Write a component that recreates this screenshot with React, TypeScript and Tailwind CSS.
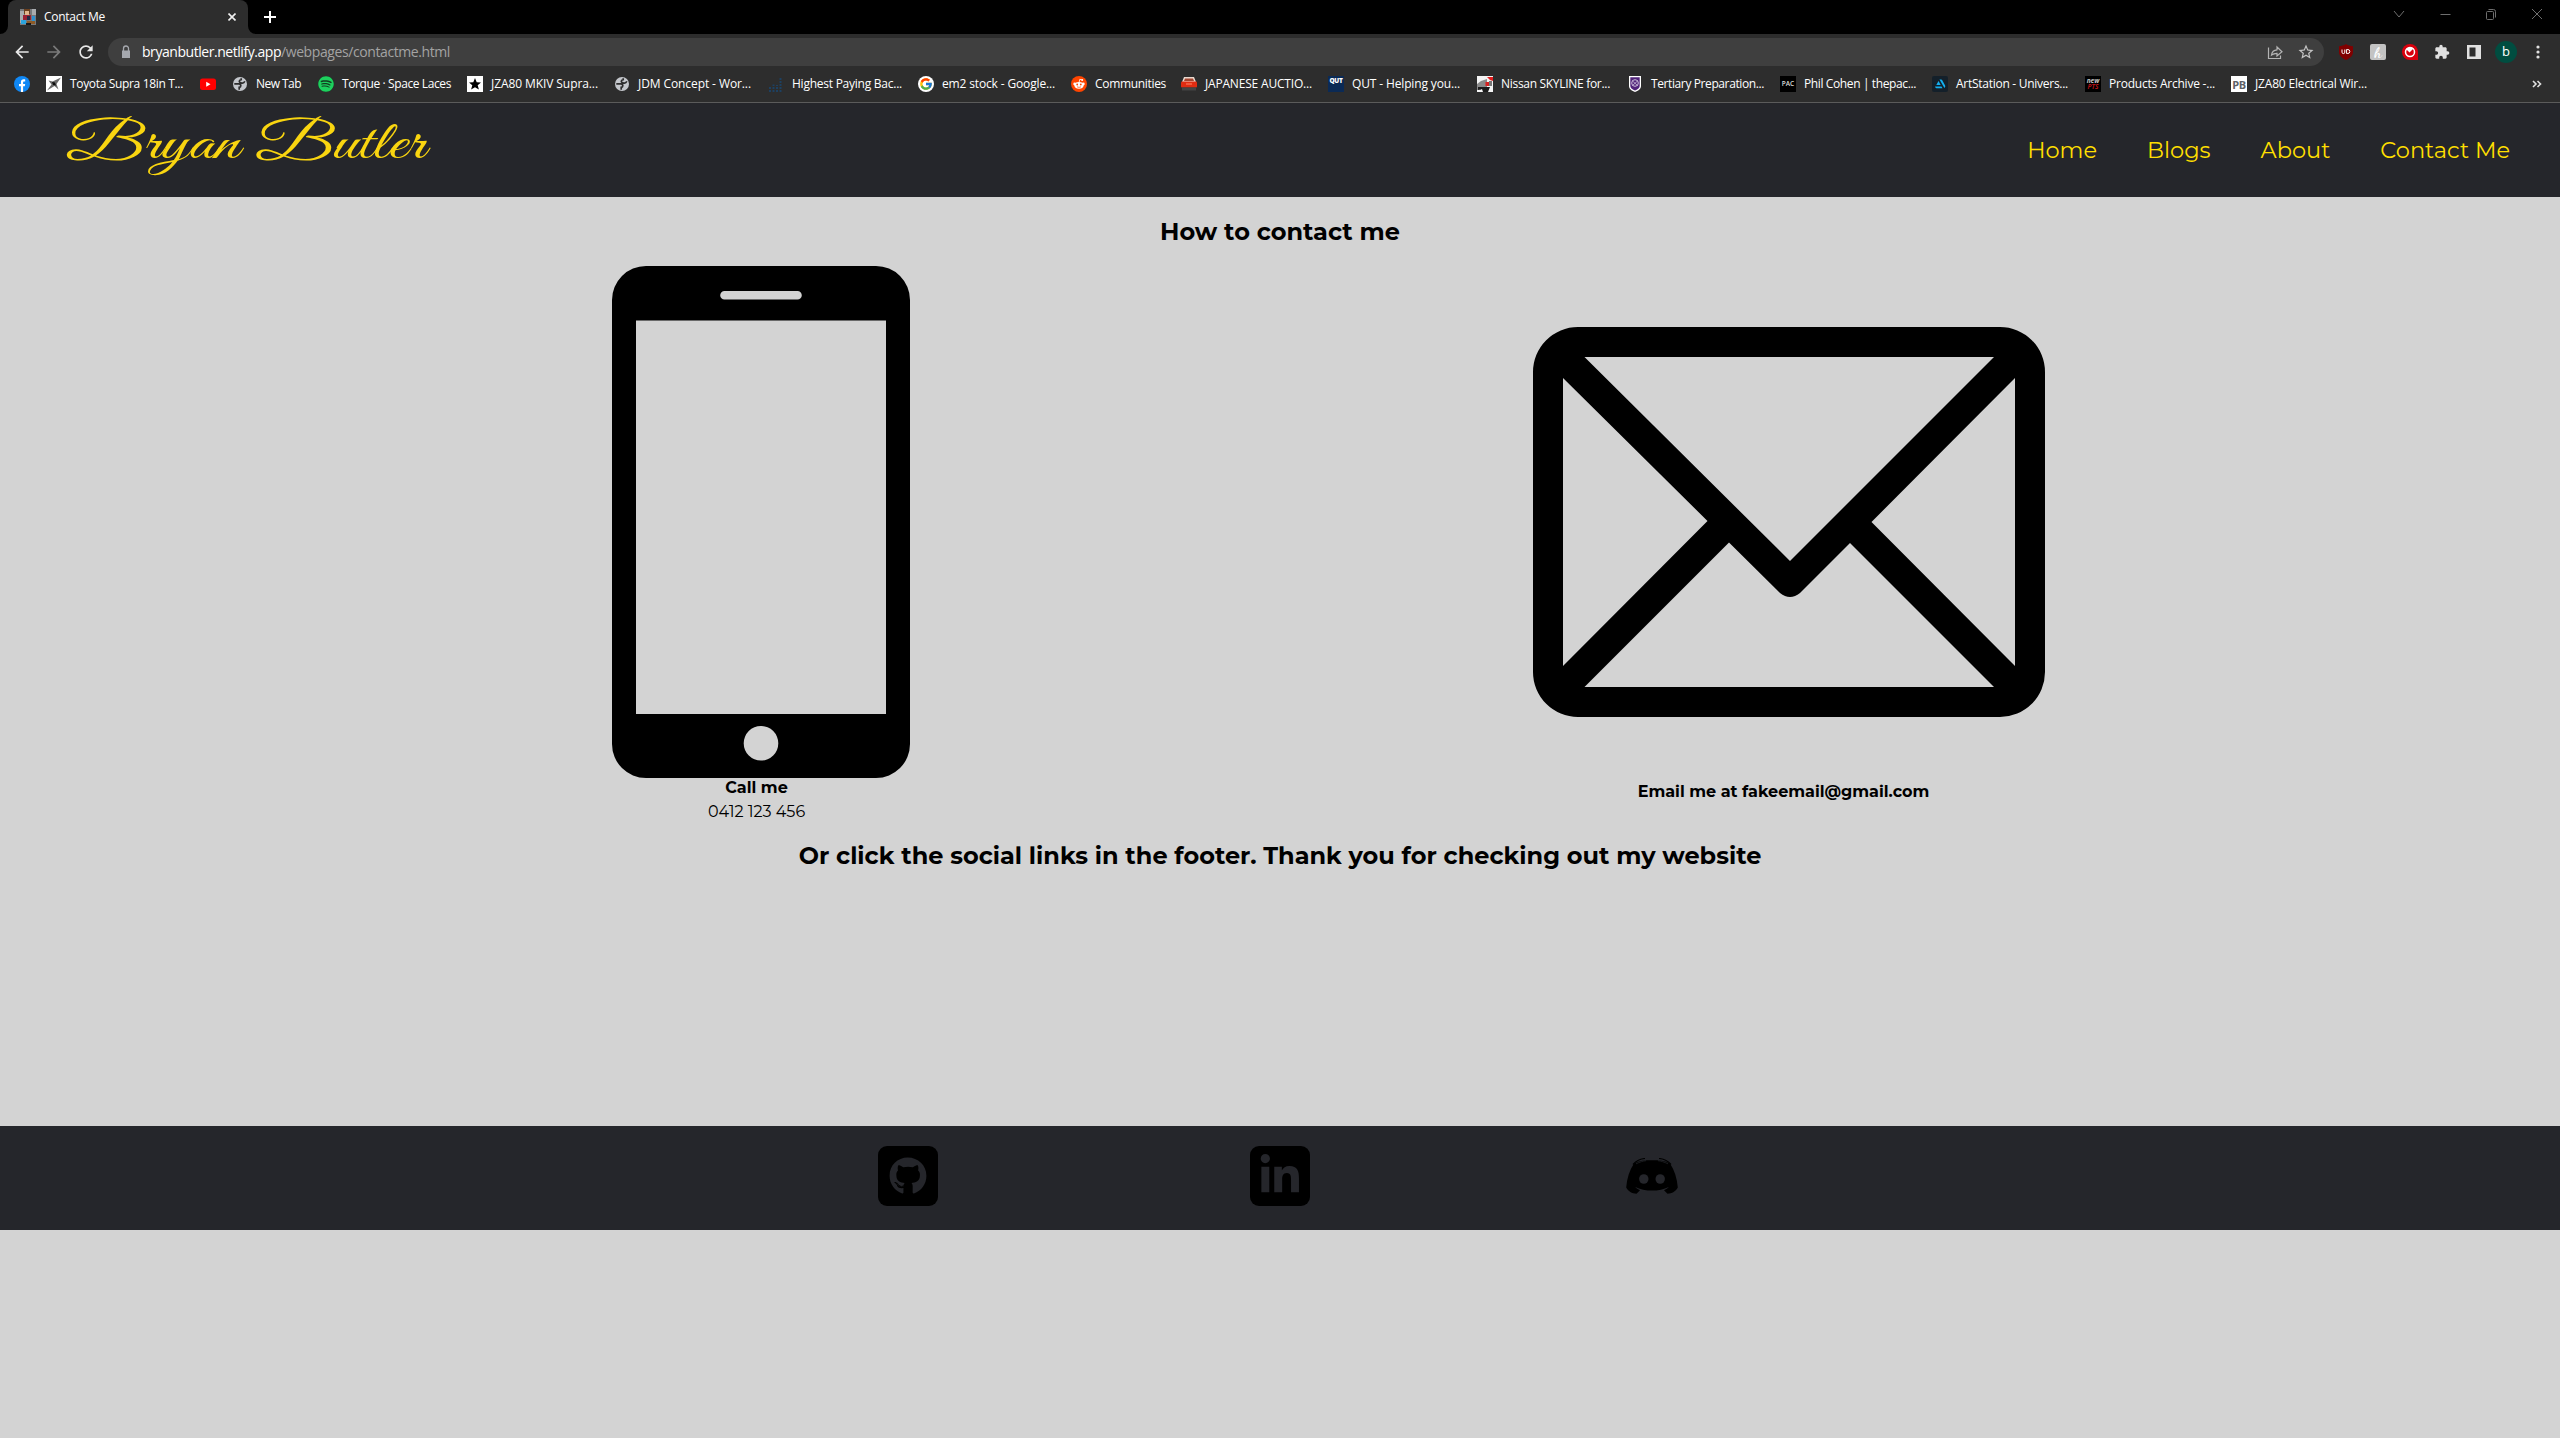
import { useLayoutEffect, useRef, useState, type ReactNode } from "react";
import { FaGithub, FaLinkedinIn, FaSpotify } from "react-icons/fa";
import { FcGoogle } from "react-icons/fc";
import { MdArrowBack, MdArrowForward, MdExtension, MdLock, MdRefresh, MdStarBorder } from "react-icons/md";

/* Spreads a single line of text over an exact width by adjusting its tracking. */
function Fit({ width, children, className = "" }: { width: number; children: string; className?: string }) {
  const ref = useRef<HTMLSpanElement>(null);
  const [spacing, setSpacing] = useState(0);
  useLayoutEffect(() => {
    if (!ref.current) return;
    const natural = ref.current.getBoundingClientRect().width - spacing * children.length;
    setSpacing((width - natural) / children.length);
  }, [width, children]);
  return (
    <span ref={ref} className={`inline-block whitespace-pre ${className}`} style={{ letterSpacing: `${spacing}px` }}>
      {children}
    </span>
  );
}

const Svg = ({ children, box = "0 0 16 16" }: { children: ReactNode; box?: string }) => (
  <svg viewBox={box} className="size-4 shrink-0">{children}</svg>
);

const Facebook = () => (
  <Svg>
    <circle cx="8" cy="8" r="8" fill="#1088f5" />
    <path d="M6.900 16V10.300H5V8h1.900V6.500c0-2 1-3.200 2.900-3.200.7 0 1.200.1 1.400.1v2h-1c-.9 0-1.100.5-1.100 1.200V8h2.100l-.4 2.300H9.100V16z" fill="#fff" />
  </Svg>
);
const Toyota = () => (
  <Svg>
    <rect width="16" height="16" fill="#fff" />
    <path d="M2.500 4.500l4 1L15 1.500 10.500 8l2 5.500L8.500 10 1 14.500 5.500 8.500z" fill="#6b6b6b" />
    <path d="M6 6l3 .5 1 3-3-.5z" fill="#0d0d0d" />
  </Svg>
);
const YouTube = () => (
  <Svg>
    <rect y="2.500" width="16" height="11.500" rx="2.500" fill="#f00" />
    <path d="M6.200 5.700v5l4.300-2.500z" fill="#fff" />
  </Svg>
);
const Globe = () => (
  <Svg>
    <circle cx="8" cy="8" r="7" fill="#c4c7cc" />
    <path d="M2.300 7.800h4.500c1.500 0 2 .9 2 1.900s-.8 1.500-1.600 1.600v2.400M12.800 5.200c-.6 1.600-1.300 2-2.600 1.900C8.600 7 7.300 6.400 7.300 5.300c0-1.200 1-1.500 1.900-1.700V2.200" fill="none" stroke="#2d2d2d" strokeWidth="1.700" />
  </Svg>
);
const Spotify = () => (
  <span className="flex size-4 shrink-0 items-center justify-center rounded-full bg-[#123d20]">
    <FaSpotify className="size-4 text-[#1ed05e]" />
  </span>
);
const StarTile = () => (
  <Svg>
    <rect width="16" height="16" fill="#fff" />
    <path d="M8 2l1.700 4.200 4.300.2-3.300 2.800 1.200 4.400L8 11.200l-3.900 2.400 1.200-4.400L2 6.400l4.300-.2z" fill="#000" />
  </Svg>
);
const Bars = () => (
  <Svg>
    <path d="M2 16V11M5.500 16V8.500M9 16V9M12.500 16V1" stroke="#1d4061" strokeWidth="2" strokeDasharray="2 1" />
  </Svg>
);
const Google = () => (
  <span className="flex size-4 shrink-0 items-center justify-center rounded-full bg-white">
    <FcGoogle className="size-[14px]" />
  </span>
);
const Reddit = () => (
  <Svg>
    <circle cx="8" cy="8" r="8" fill="#ff4500" />
    <path d="M8.200 6l.6-2.700 2 .5" stroke="#fff" strokeWidth=".8" fill="none" />
    <circle cx="11.200" cy="3.900" r="1" fill="#fff" />
    <circle cx="3.600" cy="7.900" r="1.300" fill="#fff" />
    <circle cx="12.400" cy="7.900" r="1.300" fill="#fff" />
    <ellipse cx="8" cy="9.300" rx="4.600" ry="3.400" fill="#fff" />
    <circle cx="6.200" cy="8.500" r=".9" fill="#ff4500" />
    <circle cx="9.800" cy="8.500" r=".9" fill="#ff4500" />
    <path d="M6 10.700c1 .8 3 .8 4 0" stroke="#ff4500" strokeWidth=".7" fill="none" />
  </Svg>
);
const RedCar = () => (
  <Svg>
    <path d="M3 1h10l2 5H1z" fill="#e8d9cf" />
    <path d="M4 2.500h8l1 2.500H3z" fill="#a5452f" />
    <rect x="0" y="5.500" width="16" height="6" rx="1" fill="#e02c12" />
    <rect x="5" y="7" width="6" height="2" fill="#f0593b" />
    <rect x="1" y="11.500" width="14" height="3" fill="#444" />
  </Svg>
);
const Qut = () => (
  <span className="flex size-4 shrink-0 justify-center overflow-hidden bg-[#0b2a55] font-['Open_Sans',sans-serif] text-[6.500px] leading-[10px] font-extrabold tracking-[-0.3px] text-white">QUT</span>
);
const Nissan = () => (
  <Svg>
    <rect width="16" height="16" fill="#f4f4f4" />
    <path d="M0 8l4-3 6-2v9H5l-1 2H0z" fill="#8a8a8a" />
    <path d="M1 11h12l-2 5H6l-1-3-4 1z" fill="#1c1c1c" />
    <path d="M10 1h6v4l-3-1z" fill="#e11f1f" />
    <rect x="8.500" y="6" width="3.500" height="4" fill="#d62222" />
    <rect x="12" y="5" width="3" height="5" fill="#777" />
  </Svg>
);
const Crest = () => (
  <Svg>
    <path d="M2 0h12v10c0 3-3 5-6 6-3-1-6-3-6-6z" fill="#fff" />
    <path d="M3.300 1.300h9.400V10c0 2.200-2.400 3.800-4.700 4.600C5.700 13.800 3.300 12.200 3.300 10z" fill="#51247a" />
    <circle cx="8" cy="7" r="3.300" fill="none" stroke="#cdbfdb" />
    <path d="M5.500 5l5 4.500M10.500 5l-5 4.500" stroke="#cdbfdb" strokeWidth=".8" />
  </Svg>
);
const Pac = () => (
  <span className="flex size-4 shrink-0 items-center justify-center overflow-hidden bg-black font-['Open_Sans',sans-serif] text-[6.500px] leading-none font-semibold text-[#ddd]">PAC</span>
);
const ArtStation = () => (
  <Svg>
    <rect width="16" height="16" rx="2" fill="#14202a" />
    <path d="M3 10.500h6.500l1 1.800H4.500c-.6 0-.9-.3-1.100-.7zM4.300 9l2.200-3.900L8.700 9zM7.500 3.500h1.700c.4 0 .7.200.9.500l3 5.600c.3.500.2.900 0 1.300l-.7 1.200z" fill="#13aff0" />
  </Svg>
);
const NewPts = () => (
  <span className="flex size-4 shrink-0 flex-col items-center justify-center overflow-hidden bg-black font-['Open_Sans',sans-serif] text-[6.500px] leading-[6px] font-bold italic">
    <span className="text-[#c9c9c9]">new</span>
    <span className="text-[#b31217]">PTS</span>
  </span>
);
const Pb = () => (
  <span className="flex size-4 shrink-0 items-center justify-center overflow-hidden bg-white font-['Open_Sans',sans-serif] text-[11px] leading-none font-bold tracking-[-0.5px] text-[#5d6066]">PB</span>
);

const bookmarks: { icon: ReactNode; label?: string; text?: number; cell: string }[] = [
  { icon: <Facebook />, cell: "w-8" },
  { icon: <Toyota />, label: "Toyota Supra 18in T...", text: 113, cell: "w-[154px]" },
  { icon: <YouTube />, cell: "w-8" },
  { icon: <Globe />, label: "New Tab", text: 45, cell: "w-[86px]" },
  { icon: <Spotify />, label: "Torque · Space Laces", text: 109, cell: "w-[149px]" },
  { icon: <StarTile />, label: "JZA80 MKIV Supra...", text: 107, cell: "w-[147px]" },
  { icon: <Globe />, label: "JDM Concept - Wor...", text: 113, cell: "w-[154px]" },
  { icon: <Bars />, label: "Highest Paying Bac...", text: 110, cell: "w-[150px]" },
  { icon: <Google />, label: "em2 stock - Google...", text: 113, cell: "w-[153px]" },
  { icon: <Reddit />, label: "Communities", text: 71, cell: "w-[110px]" },
  { icon: <RedCar />, label: "JAPANESE AUCTIO...", text: 107, cell: "w-[147px]" },
  { icon: <Qut />, label: "QUT - Helping you...", text: 108, cell: "w-[149px]" },
  { icon: <Nissan />, label: "Nissan SKYLINE for...", text: 109, cell: "w-[150px]" },
  { icon: <Crest />, label: "Tertiary Preparation...", text: 113, cell: "w-[153px]" },
  { icon: <Pac />, label: "Phil Cohen | thepac...", text: 112, cell: "w-[152px]" },
  { icon: <ArtStation />, label: "ArtStation - Univers...", text: 112, cell: "w-[153px]" },
  { icon: <NewPts />, label: "Products Archive -...", text: 106, cell: "w-[146px]" },
  { icon: <Pb />, label: "JZA80 Electrical Wir...", text: 112, cell: "w-[150px]" },
];

function TabStrip() {
  return (
    <div className="flex h-[34px] justify-between bg-black">
      <div className="flex">
        <svg viewBox="0 0 8 34" className="h-[34px] w-2 fill-[#2d2d2d]"><path d="M8 26v8H0a8 8 0 0 0 8-8z" /></svg>
        <div className="flex w-[240px] items-center rounded-t-lg bg-[#2d2d2d] pr-3 pl-3 text-white">
          <Svg>
            <rect width="16" height="16" fill="#77797c" />
            <path d="M0 2h4v12H0zM12 0h4v6h-4z" fill="#a9abae" />
            <rect x="4" y="0" width="6" height="5" fill="#6b3f1d" />
            <rect x="5" y="2" width="4" height="4" fill="#e2b48c" />
            <rect x="3" y="6" width="8" height="5" fill="#9b2032" />
            <rect x="7" y="7" width="3" height="4" fill="#222a44" />
            <rect x="1" y="11" width="5" height="4" fill="#2ba4dd" />
            <rect x="12" y="7" width="3" height="5" fill="#2b8fd0" />
            <rect x="7" y="12" width="8" height="3" fill="#8c5a26" />
            <rect x="6" y="14" width="5" height="2" fill="#151515" />
          </Svg>
          <Fit width={61} className="ml-2 text-[12px] leading-none">Contact Me</Fit>
          <svg viewBox="0 0 8 8" className="ml-auto size-2 stroke-[#f0f0f0] stroke-[1.600]"><path d="M.5.5l7 7M7.500.5l-7 7" /></svg>
        </div>
        <svg viewBox="0 0 8 34" className="h-[34px] w-2 fill-[#2d2d2d]"><path d="M0 26v8h8a8 8 0 0 1-8-8z" /></svg>
        <svg viewBox="0 0 12 34" className="ml-2 h-[34px] w-3 stroke-white stroke-2"><path d="M6 11v12M0 17h12" /></svg>
      </div>
      <div className="mt-2 mr-[17px] flex h-3 w-[150px] justify-between">
        <svg viewBox="0 0 12 12" className="h-3 w-3 fill-none stroke-[#6e6e6e]"><path d="M1 3l5 6 5-6" /></svg>
        <svg viewBox="0 0 12 12" className="h-3 w-3 fill-none stroke-[#6e6e6e]"><path d="M1.500 6.500h10" /></svg>
        <svg viewBox="0 0 12 12" className="h-3 w-3 fill-none stroke-[#6e6e6e]"><rect x="1.500" y="3.500" width="7" height="8" rx="1" /><path d="M3.500 1.500h5a2 2 0 0 1 2 2v6" /></svg>
        <svg viewBox="0 0 12 12" className="h-3 w-3 fill-none stroke-[#6e6e6e]"><path d="M1 1l10 10M11 1L1 11" /></svg>
      </div>
    </div>
  );
}

function Toolbar() {
  return (
    <div className="flex h-9 items-center bg-[#2d2d2d] pl-3 text-[#e8e8e8]">
      <MdArrowBack className="size-5" />
      <MdArrowForward className="ml-3 size-5 text-[#7a7a7a]" />
      <MdRefresh className="ml-3 size-5" />
      <div className="ml-3 flex h-7 w-[2216px] items-center rounded-full bg-[#3f3f3f] pr-[9px] pl-[10px]">
        <svg viewBox="0 0 16 16" className="size-4">
          <path d="M4 6.500h8v7.500H4z" fill="#a5a8ae" /><path d="M5.500 7V4.500a2.500 2.500 0 0 1 5 0V7" fill="none" stroke="#a5a8ae" strokeWidth="1.300" />
        </svg>
        <span className="ml-2 flex text-[14px] leading-none">
          <Fit width={139} className="text-white">bryanbutler.netlify.app</Fit>
          <Fit width={169} className="text-[#a3a3a3]">/webpages/contactme.html</Fit>
        </span>
        <svg viewBox="0 0 16 16" className="ml-auto size-4 fill-none stroke-[#b4b4b4] stroke-[1.200]">
          <path d="M1.500 3.500v11h12v-3" /><path d="M4.500 11c.5-3.500 2.500-5 5.500-5.200V3l5 4.700-5 4.300V9.300C7.500 9.300 6 9.800 4.500 11z" />
        </svg>
        <MdStarBorder className="ml-[14px] size-[18px] text-[#c4c4c4]" />
      </div>
      <div className="ml-[14px] flex items-center gap-4">
        <span className="flex size-4 items-center justify-center">
          <svg viewBox="0 0 16 16" className="size-4">
            <path d="M8 0c2 1.500 4.500 2 7 2.200V8c0 4-3.500 6.500-7 8-3.500-1.500-7-4-7-8V2.200C3.500 2 6 1.500 8 0z" fill="#800000" />
            <path d="M4 5.500v2.700a1.400 1.400 0 0 0 2.800 0V5.500M8.600 5.500v4h1.200a2 2 0 0 0 0-4z" fill="none" stroke="#fff" />
          </svg>
        </span>
        <span className="flex size-4 items-center justify-center rounded-[2px] bg-[#c3c3c3] font-['Dancing_Script','Liberation_Serif',serif] text-[15px] leading-none font-bold text-white">h</span>
        <svg viewBox="0 0 16 16" className="size-4">
          <path d="M8 0a8 8 0 0 1 8 8v8H8A8 8 0 0 1 8 0z" fill="#d9000d" />
          <circle cx="8" cy="8" r="4.500" fill="none" stroke="#fff" strokeWidth="1.500" />
          <path d="M4.500 5.500L7.500 8.500 11.500 4.500A4.500 4.500 0 0 0 4.500 5.500z" fill="#fff" />
        </svg>
        <MdExtension className="size-4 text-[#e0e0e0]" />
        <svg viewBox="0 0 16 16" className="size-4"><path d="M1 1h14v14H1zM3.500 3.500v9h6v-9z" fill="#e0e0e0" fillRule="evenodd" /></svg>
      </div>
      <span className="ml-[13px] flex size-[22px] items-center justify-center rounded-full bg-[#004d40] pb-px text-[13px] leading-none text-white">b</span>
      <svg viewBox="0 0 4 16" className="ml-[19px] h-4 w-1 fill-[#e0e0e0]"><circle cx="2" cy="3" r="1.600" /><circle cx="2" cy="8" r="1.600" /><circle cx="2" cy="13" r="1.600" /></svg>
    </div>
  );
}

function BookmarksBar() {
  return (
    <div className="flex h-[33px] items-center border-b border-[#5b5b5b] bg-[#2d2d2d] pr-[18px] pb-1 pl-[14px] text-[12px] leading-none text-white">
      {bookmarks.map((b, i) => (
        <div key={i} className={`flex shrink-0 items-center gap-2 ${b.cell}`}>
          {b.icon}
          {b.label && <Fit width={b.text ?? 0} className="-mt-px">{b.label}</Fit>}
        </div>
      ))}
      <svg viewBox="0 0 10 8" className="ml-auto h-2 w-[10px] fill-none stroke-[#e0e0e0] stroke-[1.600]"><path d="M1 1l3 3-3 3M5.500 1l3 3-3 3" /></svg>
    </div>
  );
}

function SiteHeader() {
  return (
    <header className="flex h-[94px] items-center justify-between bg-[#25262b] pr-[50px] pl-[66px]">
      <a className="origin-left -translate-y-[4px] scale-x-[1.345] font-['Great_Vibes','Liberation_Serif',cursive] text-[54px] leading-none [word-spacing:3px] whitespace-nowrap text-[#f9d510]">Bryan Butler</a>
      <nav className="flex gap-[50px] text-[22.500px] leading-none text-[#ffdf00]">
        <a>Home</a>
        <a>Blogs</a>
        <a>About</a>
        <a>Contact Me</a>
      </nav>
    </header>
  );
}

const Phone = () => (
  <svg viewBox="0 0 512 512" className="ml-2 size-[512px]">
    <path fillRule="evenodd" d="M141 0h230a34 34 0 0 1 34 34v444a34 34 0 0 1-34 34H141a34 34 0 0 1-34-34V34a34 34 0 0 1 34-34zM131 54.500v393.500h250V54.500zM219.500 25a4.300 4.300 0 0 0 0 8.600h73a4.300 4.300 0 0 0 0-8.600zM256 460a17.300 17.300 0 1 0 0 34.600 17.300 17.300 0 0 0 0-34.600z" />
  </svg>
);

const Envelope = () => (
  <svg viewBox="0 0 512 512" className="ml-[10px] size-[512px]">
    <path fillRule="evenodd" d="M45 61h422a45 45 0 0 1 45 45v300a45 45 0 0 1-45 45H45a45 45 0 0 1-45-45V106a45 45 0 0 1 45-45zM51.500 91L257 295 461 91zM30 112v288l144.500-145zM482 112L338.500 256 482 400zM51.500 421H461L317 277l-50 50q-10 8-20 0l-51-50.500z" />
  </svg>
);

const Discord = () => (
  <svg viewBox="0 0 52 36" className="h-9 w-[52px]">
    <path d="M8 5.500C13 2.800 19 2.300 26 2.300S39 2.800 44 5.500C48.500 12 51 20 51.800 29.500 50 33 46 35.600 41.500 35.800L38 32.200c2-.8 3.500-1.800 4.800-3.200C38 31.500 32 32.600 26 32.600S14 31.500 9.200 29c1.300 1.400 2.800 2.400 4.800 3.200l-3.500 3.600C6 35.600 2 33 .2 29.500 1 20 3.500 12 8 5.500z" />
    <path d="M7 6.500C10 3 14.500.8 19 .5M45 6.500C42 3 37.500.8 33 .5" fill="none" stroke="#000" strokeWidth="1.200" />
    <path d="M10 5.800C14 4 17 3 20 2.700M42 5.800C38 4 35 3 32 2.700" fill="none" stroke="#25262b" strokeWidth=".7" />
    <ellipse cx="17.800" cy="21" rx="4.700" ry="4.800" fill="#25262b" />
    <ellipse cx="34.200" cy="21" rx="4.700" ry="4.800" fill="#25262b" />
  </svg>
);

export default function App() {
  return (
    <div className="flex min-h-[1438px] w-full flex-col bg-[#d3d3d3] font-['Montserrat','Open_Sans',sans-serif] text-black">
      <div className="font-['Segoe_UI','Open_Sans',sans-serif]">
        <TabStrip />
        <Toolbar />
        <BookmarksBar />
      </div>
      <SiteHeader />
      <main className="flex h-[929px] flex-col text-center">
        <h2 className="text-[24px] leading-[69px] font-bold">How to contact me</h2>
        <section className="mx-auto grid w-[2054px] translate-x-[-10px] grid-cols-2">
          <div className="flex flex-col items-center">
            <Phone />
            <h4 className="text-base leading-[20px] font-bold">Call me</h4>
            <p className="text-base leading-[28px]">0412 123 456</p>
          </div>
          <div className="flex flex-col items-center">
            <Envelope />
            <h4 className="text-base leading-[28px] font-bold">Email me at fakeemail@gmail.com</h4>
          </div>
        </section>
        <h2 className="text-[24px] leading-[59px] font-bold">Or click the social links in the footer. Thank you for checking out my website</h2>
      </main>
      <footer className="grid h-[104px] grid-cols-[372px_372px_372px] justify-items-center justify-center bg-[#25262b] pt-5 text-[#25262b]">
        <a className="flex size-[60px] items-center justify-center rounded-[9px] bg-black"><FaGithub className="size-[38px]" /></a>
        <a className="flex size-[60px] items-center justify-center rounded-[9px] bg-black"><FaLinkedinIn className="size-[43.700px]" /></a>
        <a className="flex h-[60px] items-center justify-center"><Discord /></a>
      </footer>
    </div>
  );
}
